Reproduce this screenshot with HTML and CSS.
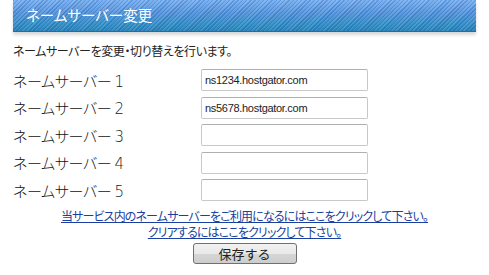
FILE: index.html
```
<!DOCTYPE html>
<html>
<head>
	<meta charset="utf-8">
	<title>ネームサーバー変更</title>
	<link rel="stylesheet" href="styles.css">
</head>
<body>
	<div class="panel">
		<h2 class="title">ネームサーバー変更</h2>
		<p class="intro">ネームサーバーを変更・切り替えを行います。</p>

		<div class="rows">
			<div class="row">
				<label class="label">ネームサーバー <span class="num">1</span></label>
				<input class="field" type="text" value="ns1234.hostgator.com">
			</div>
			<div class="row">
				<label class="label">ネームサーバー <span class="num">2</span></label>
				<input class="field" type="text" value="ns5678.hostgator.com">
			</div>
			<div class="row">
				<label class="label">ネームサーバー <span class="num">3</span></label>
				<input class="field" type="text">
			</div>
			<div class="row">
				<label class="label">ネームサーバー <span class="num">4</span></label>
				<input class="field" type="text">
			</div>
			<div class="row">
				<label class="label">ネームサーバー <span class="num">5</span></label>
				<input class="field" type="text">
			</div>
		</div>

		<div class="links">
			<a href="#">当サービス内のネームサーバーをご利用になるにはここをクリックして下さい。</a><br>
			<a href="#">クリアするにはここをクリックして下さい。</a>
		</div>
		<div class="actions">
			<button class="save">保存する</button>
		</div>
	</div>
</body>
</html>
```

FILE: styles.css
```
body {
	margin: 0;
	background: #fff;
	font-family: "Noto Sans CJK JP", "Noto Sans", sans-serif;
	color: #222;
}
.panel {
	width: 463px;
	margin-left: 13px;
}
.title {
	margin: 0;
	height: 31px;
	padding-left: 13px;
	font-size: 14.5px;
	font-weight: normal;
	line-height: 30px;
	color: #fff;
	font-feature-settings: "palt";
	background:
		repeating-linear-gradient(135deg, rgba(20,60,140,0.22) 0 1px, rgba(255,255,255,0.1) 1px 2px, rgba(0,0,0,0) 2px 3px),
		linear-gradient(#7ab2f2, #5a98de 40%, #3592c8 78%, #2a86ba);
	border-bottom: 1px solid #2a6a9c;
	box-shadow: 0 3px 3px #d8d8d8;
}
.intro {
	margin: 11px 0 10px;
	font-size: 12px;
	line-height: 16px;
	letter-spacing: -0.4px;
	font-feature-settings: "palt";
}
.rows {
	display: flex;
	flex-direction: column;
	gap: 5px;
}
.row {
	display: flex;
	align-items: center;
	height: 22.5px;
}
.label {
	width: 188px;
	font-size: 15px;
	font-weight: 300;
	color: #111;
	font-feature-settings: "palt";
	letter-spacing: -0.3px;
}
.num {
	font-family: "DejaVu Sans", sans-serif;
	font-size: 15px;
	color: #222;
}
.field {
	box-sizing: border-box;
	width: 167px;
	height: 22px;
	margin: 0;
	padding: 0 3px;
	border: 1px solid #c8c8c8;
	border-top-color: #b0b0b0;
	border-radius: 2px;
	font-family: "Liberation Sans", sans-serif;
	font-size: 11px;
	letter-spacing: -0.3px;
	color: #222;
}
.links {
	margin-top: 6px;
	text-align: center;
	font-size: 12px;
	line-height: 16px;
	letter-spacing: -0.85px;
	font-feature-settings: "palt";
}
.links a {
	color: #1a3fa0;
}
.actions {
	text-align: center;
}
.save {
	width: 104px;
	height: 21px;
	padding: 0;
	border: 1px solid #707070;
	border-radius: 3px;
	background: linear-gradient(#f2f2f2, #e8e8e8 50%, #d6d6d6 51%, #cdcdcd);
	font-family: "Noto Sans CJK JP", sans-serif;
	font-size: 13px;
	line-height: 19px;
	color: #222;
}
```
